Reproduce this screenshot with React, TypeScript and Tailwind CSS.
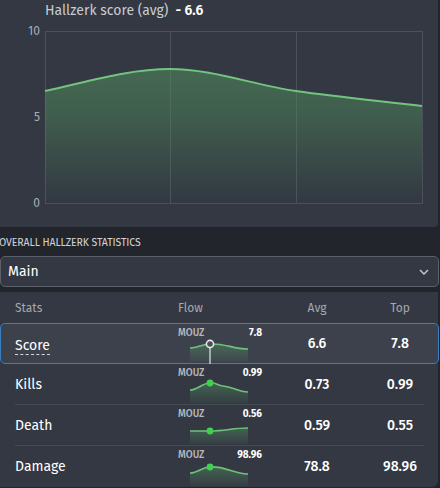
import React from "react";

type Row = {
  name: string;
  val: string;
  avg: string;
  top: string;
  pts: [number, number][];
  dot: [number, number];
  selected?: boolean;
};

const rows: Row[] = [
  { name: "Score", val: "7.8", avg: "6.6", top: "7.8", pts: [[0, 9], [20, 5], [58, 10]], dot: [20, 5], selected: true },
  { name: "Kills", val: "0.99", avg: "0.73", top: "0.99", pts: [[0, 10], [20, 3], [33, 6], [58, 12]], dot: [20, 3] },
  { name: "Death", val: "0.56", avg: "0.59", top: "0.55", pts: [[0, 10], [20, 10], [58, 7]], dot: [20, 10] },
  { name: "Damage", val: "98.96", avg: "78.8", top: "98.96", pts: [[0, 10], [20, 4], [58, 11]], dot: [20, 4] },
];

function smooth(pts: [number, number][]) {
  let d = `M${pts[0][0]},${pts[0][1]}`;
  for (let i = 1; i < pts.length; i++) {
    const [x0, y0] = pts[i - 1];
    const [x1, y1] = pts[i];
    const dx = (x1 - x0) / 2.5;
    d += ` C${x0 + dx},${y0 + (i > 1 ? (y0 - pts[i - 2][1]) * 0.2 : 0)} ${x1 - dx},${y1} ${x1},${y1}`;
  }
  return d;
}

function Spark({ r, idx }: { r: Row; idx: number }) {
  const line = smooth(r.pts);
  const area = `${line} L58,23 L0,23 Z`;
  return (
    <svg width="60" height="24" viewBox="0 0 60 24" className="overflow-visible block">
      <defs>
        <linearGradient id={`sg${idx}`} x1="0" y1="0" x2="0" y2="1">
          <stop offset="0" stopColor="#5fb26c" stopOpacity="0.35" />
          <stop offset="1" stopColor="#5fb26c" stopOpacity="0.05" />
        </linearGradient>
      </defs>
      <path d={area} fill={`url(#sg${idx})`} />
      <path d={line} fill="none" stroke="#6cc47a" strokeWidth="1.6" />
      {r.selected ? (
        <>
          <line x1={r.dot[0]} y1={r.dot[1]} x2={r.dot[0]} y2="25" stroke="#e5e7eb" strokeWidth="1.2" />
          <circle cx={r.dot[0]} cy={r.dot[1]} r="3.6" fill="#4a4f58" stroke="#e5e7eb" strokeWidth="1.6" />
        </>
      ) : (
        <circle cx={r.dot[0]} cy={r.dot[1]} r="3.4" fill="#3fd14f" />
      )}
    </svg>
  );
}

function RowCells({ r, i }: { r: Row; i: number }) {
  return (
    <>
      <div className="w-[163px] flex items-center">
        <span
          className={
            r.selected
              ? "text-[14px] text-white border-b border-dashed border-[#d5d8dc] leading-[17px] mt-[4px]"
              : "text-[14px] text-white"
          }
        >
          {r.name}
        </span>
      </div>
      <div className="w-[106px] flex flex-col pt-[3px]">
        <div className="flex w-[84px] justify-between items-start h-[14px]">
          <span className="text-[10px] text-[#b5b9bf] font-medium leading-[12px]">MOUZ</span>
          <span className="text-[10px] text-white font-bold leading-[12px]">{r.val}</span>
        </div>
        <div className="ml-[12px]">
          <Spark r={r} idx={i} />
        </div>
      </div>
      <div className="w-[66px] flex items-center justify-center text-[14px] font-medium text-white">{r.avg}</div>
      <div className="w-[30px]" />
      <div className="w-[40px] flex items-center justify-center text-[14px] font-medium text-white">{r.top}</div>
    </>
  );
}

export default function App() {
  return (
    <div
      className="w-[440px] h-[488px] bg-[#22252b] overflow-hidden text-[#e6e8eb]"
      style={{ fontFamily: '"Fira Sans", "Open Sans", "Noto Sans", sans-serif' }}
    >
      {/* chart panel */}
      <div className="w-[438px] h-[227px] bg-[#333842] rounded-br-[4px] relative">
        <div className="absolute left-[45px] top-[1px] text-[14px] leading-[20px] text-[#c9ccd1]">
          Hallzerk score (avg) <span className="text-white font-semibold">&nbsp;- 6.6</span>
        </div>
        <svg width="438" height="227" viewBox="0 0 438 227" className="block">
          <defs>
            <linearGradient id="cg" x1="0" y1="0" x2="0" y2="1">
              <stop offset="0" stopColor="#4f8a5c" stopOpacity="0.6" />
              <stop offset="0.35" stopColor="#4f8a5c" stopOpacity="0.45" />
              <stop offset="1" stopColor="#4f8a5c" stopOpacity="0" />
            </linearGradient>
          </defs>
          <rect x="45.5" y="31.5" width="377" height="172" fill="none" stroke="#4b5159" />
          <line x1="170.5" y1="31" x2="170.5" y2="203" stroke="#4b5159" />
          <line x1="296.5" y1="31" x2="296.5" y2="203" stroke="#4b5159" />
          <path
            d="M45,91 C87,82 128,69 170,69 C212,69 254,85 296,91 C338,97 380,101 422,106 L422,203 L45,203 Z"
            fill="url(#cg)"
          />
          <path
            d="M45,91 C87,82 128,69 170,69 C212,69 254,85 296,91 C338,97 380,101 422,106"
            fill="none"
            stroke="#72c47f"
            strokeWidth="2"
          />
          <g fill="#a9adb4" fontSize="12" textAnchor="end">
            <text x="40" y="35">10</text>
            <text x="40" y="121">5</text>
            <text x="40" y="207">0</text>
          </g>
        </svg>
      </div>

      {/* label */}
      <div className="h-[29px] flex items-center pt-[2px] text-[10.5px] uppercase text-[#d0d3d8] -ml-[1px] tracking-[-0.1px]">
        Overall Hallzerk statistics
      </div>

      {/* select */}
      <div className="h-[31px] w-[439px] border border-[#5b6069] rounded-[5px] bg-[#333842] flex items-center justify-between px-[7px]">
        <span className="text-[14px] text-white">Main</span>
        <svg width="10" height="6" viewBox="0 0 10 6" className="mr-[2px]">
          <path d="M1 1 L5 5 L9 1" fill="none" stroke="#c9ccd1" strokeWidth="1.4" />
        </svg>
      </div>

      {/* table panel */}
      <div className="mt-[5px] w-[438px] h-[195px] bg-[#333842] rounded-br-[6px] flex flex-col">
        <div className="h-[31px] flex items-center text-[12px] text-[#a5a9b0]">
          <div className="w-[178px] pl-[15px]">Stats</div>
          <div className="w-[106px]">Flow</div>
          <div className="w-[66px] text-center">Avg</div>
          <div className="w-[30px]" />
          <div className="w-[40px] text-center">Top</div>
        </div>
        {rows.map((r, i) =>
          r.selected ? (
            <div
              key={r.name}
              className="h-[41px] flex items-stretch border border-[#3a7fbf] rounded-[5px] bg-[#3c414b] w-[439px] pl-[14px]"
            >
              <RowCells r={r} i={i} />
            </div>
          ) : (
            <div key={r.name} className="h-[41px] ml-[15px] mr-[14px] flex items-stretch">
              <div
                className={
                  i === rows.length - 1
                    ? "flex items-stretch w-full"
                    : "flex items-stretch w-full border-b border-[#454b54]"
                }
              >
                <RowCells r={r} i={i} />
              </div>
            </div>
          )
        )}
      </div>
    </div>
  );
}
